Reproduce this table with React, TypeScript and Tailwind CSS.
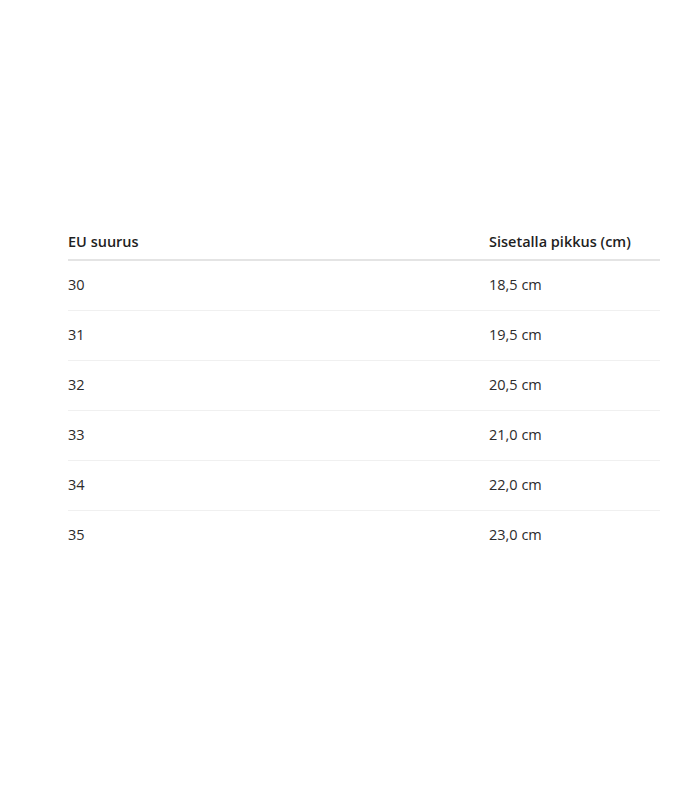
import React from 'react';

const rows = [
  ['30', '18,5 cm'],
  ['31', '19,5 cm'],
  ['32', '20,5 cm'],
  ['33', '21,0 cm'],
  ['34', '22,0 cm'],
  ['35', '23,0 cm'],
];

export default function App() {
  return (
    <div className="w-[700px] h-[800px] bg-white pt-[224px] pl-[68px] pr-[40px] font-['Open_Sans',sans-serif] text-[14.5px] text-[#2b2b2b]">
      <div className="grid grid-cols-[421px_1fr] h-[37px] items-center border-b-2 border-[#e4e4e4] font-semibold text-[#1f1f1f]">
        <div>EU suurus</div>
        <div>Sisetalla pikkus (cm)</div>
      </div>
      {rows.map(([size, length], i) => (
        <div
          key={size}
          className={
            'grid grid-cols-[421px_1fr] h-[50px] pb-[2px] items-center ' +
            (i < rows.length - 1 ? 'border-b border-[#f0f0f0]' : '')
          }
        >
          <div>{size}</div>
          <div>{length}</div>
        </div>
      ))}
    </div>
  );
}
